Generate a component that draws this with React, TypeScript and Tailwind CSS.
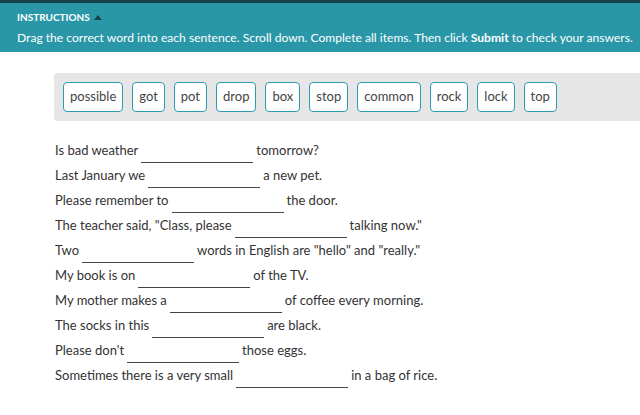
import React from "react";

const words = ["possible", "got", "pot", "drop", "box", "stop", "common", "rock", "lock", "top"];

// each sentence: text before the blank, text after it
const sentences: [string, string][] = [
  ["Is bad weather", "tomorrow?"],
  ["Last January we", "a new pet."],
  ["Please remember to", "the door."],
  ['The teacher said, "Class, please', 'talking now."'],
  ["Two", 'words in English are "hello" and "really."'],
  ["My book is on", "of the TV."],
  ["My mother makes a", "of coffee every morning."],
  ["The socks in this", "are black."],
  ["Please don't", "those eggs."],
  ["Sometimes there is a very small", "in a bag of rice."],
];

export default function App() {
  return (
    <div className="w-[640px] h-[415px] bg-white overflow-hidden font-['Lato','Open_Sans',sans-serif] text-[#333]">
      {/* Instructions banner */}
      <div className="bg-[#2a97a8] border-t-[3px] border-[#17434c] px-[17px] pt-[7px] pb-[4px] text-white">
        <div className="flex items-center gap-[4px] h-[14px] text-[10px] font-bold uppercase leading-[14px]">
          <span>Instructions</span>
          <span className="w-0 h-0 border-l-[4px] border-r-[4px] border-b-[5px] border-l-transparent border-r-transparent border-b-[#17434c]" />
        </div>
        <p className="mt-[4px] h-[20px] text-[12.1px] leading-[20px] whitespace-nowrap">
          Drag the correct word into each sentence. Scroll down. Complete all items. Then click <b>Submit</b> to check your answers.
        </p>
      </div>

      {/* Word bank */}
      <div className="mt-[21px] ml-[54px] flex gap-[9px] bg-[#e6e6e6] rounded-l-[4px] p-[9px]">
        {words.map((w) => (
          <div
            key={w}
            className="h-[30px] px-[6px] flex items-center bg-white border-[1.5px] border-[#2f9bb0] rounded-[4px] text-[13px] text-[#444]"
          >
            {w}
          </div>
        ))}
      </div>

      {/* Sentences */}
      <div className="mt-[17px] ml-[55px] flex flex-col">
        {sentences.map(([before, after], i) => (
          <div key={i} className="flex h-[25px] items-center text-[13px] leading-[25px]">
            <span>{before}</span>
            <span className="self-stretch w-[112px] mx-[3px] border-b border-[#444]" />
            <span>{after}</span>
          </div>
        ))}
      </div>
    </div>
  );
}
